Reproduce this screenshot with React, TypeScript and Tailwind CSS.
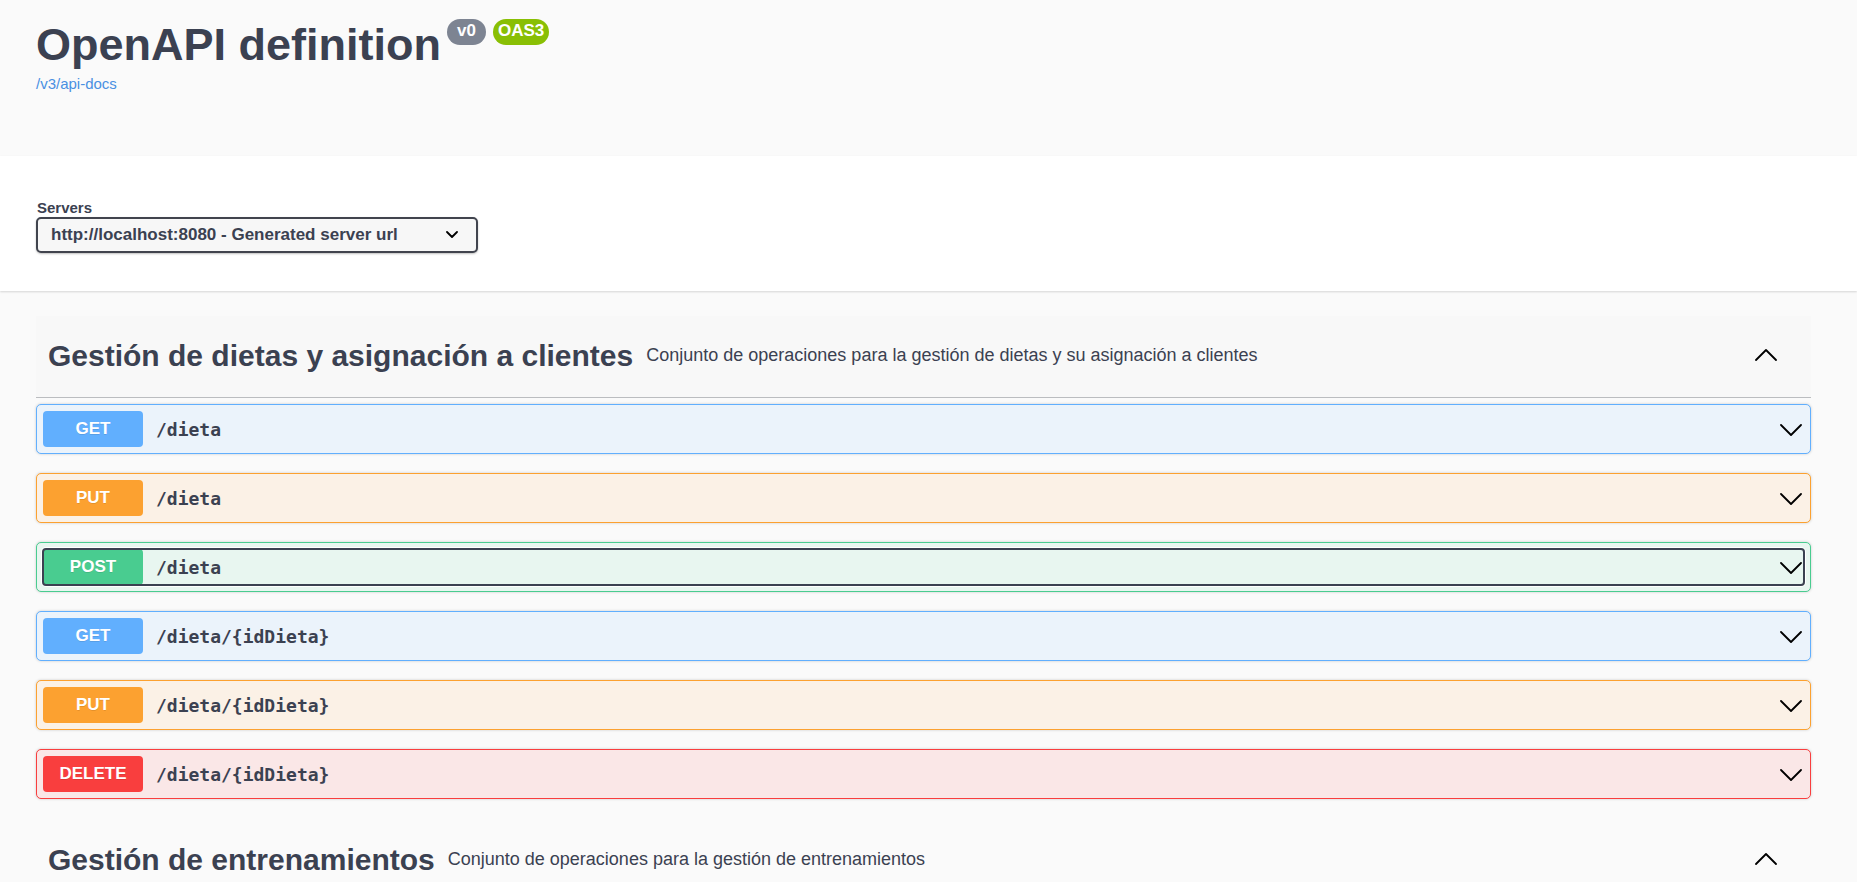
import React from "react";

type Method = "GET" | "PUT" | "POST" | "DELETE";

interface Operation {
  method: Method;
  path: string;
  focused?: boolean;
}

interface Section {
  id: string;
  title: string;
  description: string;
  highlighted?: boolean;
  operations: Operation[];
}

const sections: Section[] = [
  {
    id: "dietas",
    title: "Gestión de dietas y asignación a clientes",
    description: "Conjunto de operaciones para la gestión de dietas y su asignación a clientes",
    highlighted: true,
    operations: [
      { method: "GET", path: "/dieta" },
      { method: "PUT", path: "/dieta" },
      { method: "POST", path: "/dieta", focused: true },
      { method: "GET", path: "/dieta/{idDieta}" },
      { method: "PUT", path: "/dieta/{idDieta}" },
      { method: "DELETE", path: "/dieta/{idDieta}" },
    ],
  },
  {
    id: "entrenamientos",
    title: "Gestión de entrenamientos",
    description: "Conjunto de operaciones para la gestión de entrenamientos",
    operations: [],
  },
];

const blockStyles: Record<Method, string> = {
  GET: "border-[#61affe] bg-[#ebf3fb]",
  PUT: "border-[#fca130] bg-[#fbf1e6]",
  POST: "border-[#49cc90] bg-[#e8f6f0]",
  DELETE: "border-[#f93e3e] bg-[#fae7e7]",
};

const badgeStyles: Record<Method, string> = {
  GET: "bg-[#61affe]",
  PUT: "bg-[#fca130]",
  POST: "bg-[#49cc90]",
  DELETE: "bg-[#f93e3e]",
};

function Chevron({ up = false }: { up?: boolean }) {
  return (
    <svg
      viewBox="0 0 22 12"
      className="h-3 w-[22px] shrink-0"
      fill="none"
      stroke="#000"
      strokeWidth="1.8"
      strokeLinecap="round"
      strokeLinejoin="round"
      aria-hidden="true"
    >
      <path d={up ? "M1 11L11 1L21 11" : "M1 1L11 11L21 1"} />
    </svg>
  );
}

function Wrapper({ children }: { children: React.ReactNode }) {
  return <div className="mx-auto w-full max-w-[1825px] px-[25px]">{children}</div>;
}

function OperationRow({ method, path, focused }: Operation) {
  return (
    <div className={`rounded-[5px] border p-[6px] shadow-[0_0_3px_rgba(0,0,0,0.19)] ${blockStyles[method]}`}>
      <button
        type="button"
        className={`flex h-9 w-full items-center rounded-[3px] text-left ${
          focused ? "outline-2 -outline-offset-1 outline-[#3b4151] ring-2 ring-white" : ""
        }`}
      >
        <span
          className={`flex h-9 w-[100px] shrink-0 items-center justify-center rounded-[4px] text-[17px] font-bold text-white [text-shadow:0_1px_0_rgba(0,0,0,0.1)] ${badgeStyles[method]}`}
        >
          {method}
        </span>
        <span className="grow px-[13px] font-['DejaVu_Sans_Mono',monospace] text-[18px] font-bold">{path}</span>
        <span className="pt-[2px] pr-[2px]">
          <Chevron />
        </span>
      </button>
    </div>
  );
}

function TagSection({ section }: { section: Section }) {
  return (
    <section className="mb-[21px]">
      <button
        type="button"
        className={`flex h-[82px] w-full items-center border-b border-[#bbbdc0] pr-[34px] pb-[2px] pl-[12px] text-left ${
          section.highlighted ? "bg-[#f8f8f8]" : ""
        }`}
      >
        <h3 className="text-[30px] font-bold whitespace-nowrap">{section.title}</h3>
        <span className="grow px-[13px] text-[18px]">{section.description}</span>
        <span className="pb-[2px]">
          <Chevron up />
        </span>
      </button>
      <div className="mt-[6px] flex flex-col gap-[19px]">
        {section.operations.map((op) => (
          <OperationRow key={op.method + op.path} {...op} />
        ))}
      </div>
    </section>
  );
}

export default function App() {
  return (
    <main className="min-h-screen bg-[#fafafa] font-['Liberation_Sans',Arial,sans-serif] text-[#3b4151]">
      <header className="h-[156px] pt-[19px] pr-[10px]">
        <Wrapper>
          <div className="flex items-start gap-[6px]">
            <h1 className="text-[45px] leading-[52px] font-bold">OpenAPI definition</h1>
            <div className="flex gap-[7px]">
              <span className="flex h-[26px] items-center rounded-full bg-[#7d8492] px-[10px] pb-[2px] text-[17px] font-bold text-white">
                v0
              </span>
              <span className="flex h-[26px] items-center rounded-full bg-[#89bf04] px-[5px] pb-[2px] text-[17px] font-bold text-white">
                OAS3
              </span>
            </div>
          </div>
          <a href="/v3/api-docs" className="block w-fit text-[15px] leading-[26px] text-[#4990e2]">
            /v3/api-docs
          </a>
        </Wrapper>
      </header>

      <div className="bg-white pt-[42px] pr-[10px] pb-[38px] shadow-[0_1px_2px_rgba(0,0,0,0.15)]">
        <Wrapper>
          <label htmlFor="servers" className="block pl-px text-[15px] leading-[19px] font-bold">
            Servers
          </label>
          <div className="relative w-fit">
            <select
              id="servers"
              className="h-9 w-[442px] appearance-none rounded-[5px] border-2 border-[#41444e] bg-[#f7f7f7] pl-[13px] text-[17px] font-bold shadow-[0_1px_2px_rgba(0,0,0,0.25)]"
            >
              <option>http://localhost:8080 - Generated server url</option>
            </select>
            <svg
              viewBox="0 0 12 8"
              className="pointer-events-none absolute top-[14px] right-5 h-2 w-3"
              fill="none"
              stroke="#000"
              strokeWidth="1.8"
              strokeLinecap="round"
              strokeLinejoin="round"
              aria-hidden="true"
            >
              <path d="M1 1L6 6L11 1" />
            </svg>
          </div>
        </Wrapper>
      </div>

      <div className="pt-[25px] pr-[10px]">
        <Wrapper>
          {sections.map((section) => (
            <TagSection key={section.id} section={section} />
          ))}
        </Wrapper>
      </div>
    </main>
  );
}
